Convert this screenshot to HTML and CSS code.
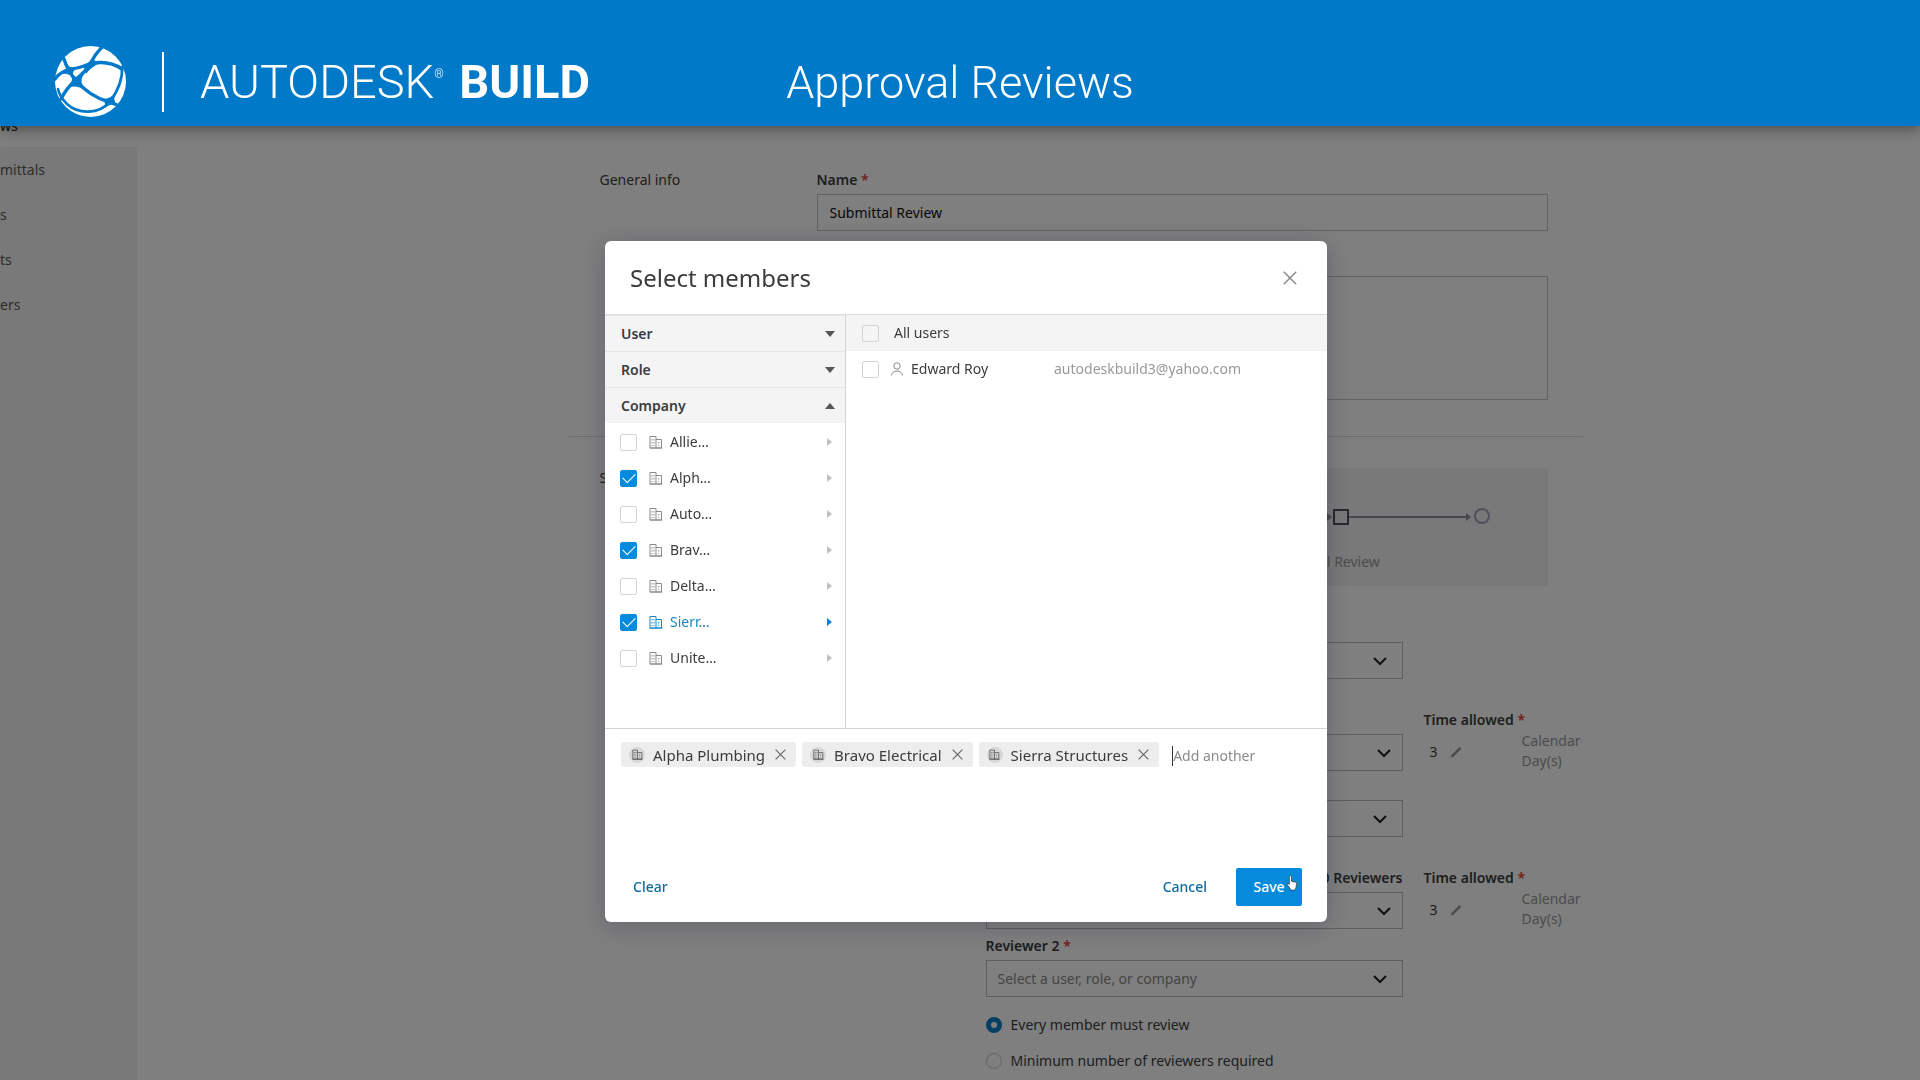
FILE: index.html
```html
<!DOCTYPE html>
<html lang="en">
<head>
<meta charset="utf-8">
<title>Autodesk Build - Approval Reviews</title>
<link rel="stylesheet" href="styles.css">
</head>
<body>
<svg class="defs" width="0" height="0" aria-hidden="true">
  <symbol id="building" viewBox="0 0 14 14">
    <path d="M1 1.500h6v11.500H1zM7 4.500h5.500V13H7M0.500 13h13" fill="none" stroke="currentColor"/>
    <path d="M3 4v7M5 4v7M9.750 7v4" fill="none" stroke="currentColor" stroke-dasharray="1.500 1.500"/>
  </symbol>
  <symbol id="cross" viewBox="0 0 14 14">
    <path d="M0.800 0.800l12.400 12.400M13.200 0.800L0.800 13.200" fill="none" stroke="currentColor" stroke-width="1.500"/>
  </symbol>
  <symbol id="chevron" viewBox="0 0 14 10">
    <path d="M1 2l6 6 6-6" fill="none" stroke="currentColor" stroke-width="2"/>
  </symbol>
  <symbol id="pencil" viewBox="0 0 12 12">
    <path d="M0.500 11.500l1-2.500L9.500 1l1.800 1.800-8 8z" fill="currentColor"/>
  </symbol>
</svg>

<header class="banner">
  <svg class="logo" viewBox="0 0 71 71" aria-hidden="true">
    <circle cx="35.500" cy="35.500" r="35.500" fill="#fff"/>
    <g fill="none" stroke="#007ac8" stroke-linecap="round">
      <path d="M48 0C42 6 38 12 35 18C32 25 25 29 20.500 34C14 40 10 45 6 53" stroke-width="3.400"/>
      <path d="M14 23C22 23 28 20 35 18C47 15 58 17 67 23" stroke-width="3.400"/>
      <path d="M9 13C11 20 15 27 20.500 34C29 44 40 52 54 56L65 60" stroke-width="3.400"/>
      <path d="M67 21C68 34 62 46 55 56C44 68 24 69 12 58C6 52 4 48 3 43" stroke-width="2.600"/>
      <path d="M0 33C4 27 9 25 14 23" stroke-width="3.400"/>
    </g>
    <g fill="#007ac8">
      <path d="M27 20Q34 18 39 10Q38 17 45 17Q36 21 31 28Q31 23 27 20z"/>
      <path d="M11 18Q14 22 22 22Q17 24 18 32Q14 27 7 28Q13 24 11 18z"/>
      <path d="M12 42Q19 38 16 28Q21 34 29 28Q23 36 31 44Q20 38 12 42z"/>
      <path d="M46 53Q56 54 61 45Q57 54 62 59Q56 57 49 62Q52 56 46 53z"/>
    </g>
  </svg>
  <span class="divider"></span>
  <p class="brand">AUTODESK<sup>®</sup> <b>BUILD</b></p>
  <h1 class="topic">Approval Reviews</h1>
</header>

<div class="page">
  <nav class="sidebar">
    <a href="#" class="active">ws</a>
    <a href="#">mittals</a>
    <a href="#">s</a>
    <a href="#">ts</a>
    <a href="#">ers</a>
  </nav>
  <main class="content">
    <form class="workflow">
      <section class="section">
        <h2>General info</h2>
        <div class="fields">
          <label for="name">Name <i>*</i></label>
          <input id="name" class="text" value="Submittal Review">
          <textarea class="text description" aria-label="Description"></textarea>
        </div>
      </section>
      <section class="section steps">
        <h2>Steps</h2>
        <div class="fields">
          <div class="diagram">
            <svg viewBox="0 0 240 26" width="240" height="26" aria-hidden="true">
              <g fill="none" stroke-width="2">
                <path d="M0 13h78M99 13h118" stroke="#8a9099" />
                <path d="M77 9l5 4-5 4zM216 9l5 4-5 4z" fill="#8a9099" />
                <rect x="84" y="6" width="14" height="14" stroke="#4d535b"/>
                <circle cx="232" cy="12" r="7" stroke="#9aa3b5"/>
              </g>
            </svg>
            <span class="caption">Final Review</span>
          </div>
          <div class="step">
            <div class="select first"><select aria-label="Step type"><option></option></select><svg><use href="#chevron"/></svg></div>
            <div class="cell"></div><div class="cell"></div>

            <div class="cell stack">
              <div class="heading"></div>
              <div class="select far"><select aria-label="Reviewer"><option></option></select><svg><use href="#chevron"/></svg></div>
            </div>
            <div class="cell">
              <div class="heading wide">Time allowed <i>*</i></div>
              <div class="days">3 <svg><use href="#pencil"/></svg></div>
            </div>
            <div class="unit">Calendar Day(s)</div>

            <div class="select second"><select aria-label="Step action"><option></option></select><svg><use href="#chevron"/></svg></div>
            <div class="cell"></div><div class="cell"></div>

            <div class="cell stack">
              <div class="heading right">0 Reviewers</div>
              <div class="select far"><select aria-label="Reviewer 1"><option></option></select><svg><use href="#chevron"/></svg></div>
            </div>
            <div class="cell">
              <div class="heading wide">Time allowed <i>*</i></div>
              <div class="days">3 <svg><use href="#pencil"/></svg></div>
            </div>
            <div class="unit">Calendar Day(s)</div>

            <div class="reviewer">
              <label for="reviewer2">Reviewer 2 <i>*</i></label>
              <div class="select"><select id="reviewer2"><option>Select a user, role, or company</option></select><svg><use href="#chevron"/></svg></div>
              <label class="radio"><input type="radio" name="rule" checked>Every member must review</label>
              <label class="radio"><input type="radio" name="rule">Minimum number of reviewers required</label>
            </div>
          </div>
        </div>
      </section>
    </form>
  </main>
</div>

<div class="overlay">
  <div class="modal" role="dialog" aria-labelledby="modal-title">
    <div class="modal-head">
      <h2 id="modal-title">Select members</h2>
      <button type="button" class="close" aria-label="Close"><svg><use href="#cross"/></svg></button>
    </div>
    <div class="modal-body">
      <div class="groups">
        <button type="button" class="group">User<span class="down"></span></button>
        <button type="button" class="group">Role<span class="down"></span></button>
        <button type="button" class="group">Company<span class="up"></span></button>
        <ul>
          <li><label><input type="checkbox"><svg><use href="#building"/></svg>Allie…</label><span class="next"></span></li>
          <li><label><input type="checkbox" checked><svg><use href="#building"/></svg>Alph…</label><span class="next"></span></li>
          <li><label><input type="checkbox"><svg><use href="#building"/></svg>Auto…</label><span class="next"></span></li>
          <li><label><input type="checkbox" checked><svg><use href="#building"/></svg>Brav…</label><span class="next"></span></li>
          <li><label><input type="checkbox"><svg><use href="#building"/></svg>Delta…</label><span class="next"></span></li>
          <li class="current"><label><input type="checkbox" checked><svg><use href="#building"/></svg>Sierr…</label><span class="next"></span></li>
          <li><label><input type="checkbox"><svg><use href="#building"/></svg>Unite…</label><span class="next"></span></li>
        </ul>
      </div>
      <div class="users">
        <label class="all"><input type="checkbox">All users</label>
        <div class="user">
          <label><input type="checkbox">
            <svg viewBox="0 0 14 14"><circle cx="7" cy="4" r="3.200" fill="none" stroke="currentColor"/><path d="M1.500 13.500c0-6 11-6 11 0" fill="none" stroke="currentColor"/></svg>
            Edward Roy</label>
          <span class="email">autodeskbuild3@yahoo.com</span>
        </div>
      </div>
    </div>
    <div class="chips">
      <span class="chip"><span class="badge"><svg><use href="#building"/></svg></span>Alpha Plumbing<button type="button" aria-label="Remove Alpha Plumbing"><svg><use href="#cross"/></svg></button></span>
      <span class="chip"><span class="badge"><svg><use href="#building"/></svg></span>Bravo Electrical<button type="button" aria-label="Remove Bravo Electrical"><svg><use href="#cross"/></svg></button></span>
      <span class="chip"><span class="badge"><svg><use href="#building"/></svg></span>Sierra Structures<button type="button" aria-label="Remove Sierra Structures"><svg><use href="#cross"/></svg></button></span>
      <input class="add" placeholder="Add another" aria-label="Add another">
    </div>
    <div class="modal-foot">
      <button type="button" class="link clear">Clear</button>
      <button type="button" class="link">Cancel</button>
      <button type="button" class="save">Save
        <svg class="pointer" viewBox="0 0 12 18" aria-hidden="true"><path d="M3 1.500q1.200-1.200 2.400 0V7l5 1.200q1 .4.900 1.600l-.8 4.200-1 3H4.500l-1-2.500L.7 11q-.4-1.400.8-1.500L3 10.500z" fill="#fff" stroke="#333" stroke-width=".8"/></svg>
      </button>
    </div>
  </div>
</div>
</body>
</html>
```
FILE: styles.css
```css
* { box-sizing: border-box; }
body {
  margin: 0;
  height: 100vh;
  overflow: hidden;
  display: flex;
  flex-direction: column;
  background: #fff;
  color: #3c3c3c;
  font: 14px/20px "Noto Sans", "Open Sans", sans-serif;
}
button, input, select, textarea { font: inherit; color: inherit; }
button { border: 0; padding: 0; background: none; cursor: pointer; }
h1, h2, p, ul { margin: 0; padding: 0; font-weight: 400; }
.defs { position: absolute; }

/* Banner */
.banner {
  position: relative;
  z-index: 3;
  flex: none;
  display: grid;
  grid-template-columns: 71px 2px 1fr;
  align-items: center;
  column-gap: 36px;
  height: 126px;
  padding: 37px 55px 0;
  background: #007ac8;
  color: #fff;
  box-shadow: 0 2px 14px rgba(0, 0, 0, .45);
}
.logo { width: 71px; height: 71px; }
.divider { height: 60px; background: #fff; }
.brand { font: 300 47px/60px Roboto, sans-serif; }
.brand sup { font-size: 12px; line-height: 12px; vertical-align: 20px; }
.brand b { font-weight: 700; margin-left: 4px; }
.topic {
  position: absolute;
  left: 0;
  right: 0;
  top: 53px;
  text-align: center;
  font: 300 45px/60px Roboto, sans-serif;
}

/* Page */
.page { flex: 1; display: flex; min-height: 0; overflow: hidden; }
.sidebar {
  flex: none;
  width: 137px;
  background: #f2f2f2;
}
.sidebar a {
  display: block;
  height: 45px;
  line-height: 45px;
  color: #5a5a5a;
  text-decoration: none;
}
.sidebar .active {
  height: 21px;
  line-height: 0;
  background: #fff;
  color: #222;
}
.content { flex: 1; padding-left: 94px; }
.workflow { max-width: 1014px; margin: 0 auto; }
.section {
  display: grid;
  grid-template-columns: 217px 1fr;
  padding: 44px 0 36px 31px;
}
.section h2 { font-size: 14px; }
.steps { padding-top: 31px; border-top: 1px solid #d9d9d9; }
.fields { display: flex; flex-direction: column; }
.fields label, .heading { font-weight: 600; }
i { color: #e0402f; font-style: normal; }
.text {
  margin: 4px 35px 0 0;
  height: 37px;
  padding: 0 12px;
  border: 1px solid #c4c4c4;
  border-radius: 0;
  background: #fff;
  color: #111;
}
.description { margin-top: 45px; height: 124px; resize: none; }
.diagram {
  display: flex;
  flex-direction: column;
  align-items: flex-end;
  gap: 22px;
  height: 118px;
  margin-right: 35px;
  padding: 36px 58px 0 0;
  background: #f2f2f2;
  color: #999;
}
.caption { width: 240px; padding-left: 50px; }
.step {
  display: grid;
  grid-template-columns: 417px 98px 60px;
  padding-left: 169px;
}
.step > :nth-child(3n+2) { padding-left: 21px; }
.select { display: grid; align-items: center; justify-items: end; }
.select > * { grid-area: 1 / 1; }
.select select {
  appearance: none;
  width: 100%;
  height: 37px;
  padding: 0 11px;
  border: 1px solid #bdbdbd;
  border-radius: 0;
  background: #fff;
  color: #8a8a8a;
}
.select svg { width: 14px; height: 10px; margin-right: 16px; color: #222; pointer-events: none; }
.select.far svg { margin-right: 12px; }
.select.first { margin-top: 56px; }
.select.second { margin-top: 29px; }
.step .unit { margin-left: 21px; width: 60px; color: #999; align-self: end; }
.heading { height: 20px; margin-bottom: 4px; }
.heading.wide { white-space: nowrap; }
.heading.right { text-align: right; }
.days { display: flex; align-items: center; gap: 12px; height: 36px; padding-left: 6px; }
.days svg { width: 12px; height: 12px; color: #999; }
.step .cell:not(:empty) { margin-top: 31px; }
.reviewer { grid-column: 1; display: flex; flex-direction: column; margin-top: 7px; }
.reviewer .select { margin-top: 4px; margin-bottom: 10px; }
.reviewer .radio { display: flex; align-items: center; gap: 9px; height: 36px; font-weight: 400; }
.radio input {
  appearance: none;
  width: 16px;
  height: 16px;
  margin: 0;
  border: 1px solid #c4c4c4;
  border-radius: 50%;
}
.radio input:checked { border: 5px solid #0a7fc8; background: #fff; }

/* Member picker */
.overlay {
  position: fixed;
  inset: 0;
  z-index: 2;
  display: flex;
  justify-content: center;
  align-items: flex-start;
  padding: 241px 0 0 12px;
  background: rgba(0, 0, 0, .5);
}
.modal {
  width: 722px;
  border-radius: 6px;
  background: #fff;
  box-shadow: 0 4px 24px rgba(40, 40, 70, .3);
  overflow: hidden;
}
.modal-head {
  display: flex;
  align-items: center;
  justify-content: space-between;
  height: 73px;
  padding: 0 30px 0 25px;
}
.modal-head h2 { font-size: 24px; line-height: 32px; }
.close svg { display: block; width: 14px; height: 14px; color: #8a8a8a; }
.modal-body {
  display: grid;
  grid-template-columns: 241px 1fr;
  height: 415px;
  border-top: 1px solid #ddd;
  border-bottom: 1px solid #d4d4d4;
}
.groups { border-right: 1px solid #d4d4d4; }
.group {
  display: flex;
  align-items: center;
  justify-content: space-between;
  width: 100%;
  height: 36px;
  padding: 0 10px 0 16px;
  border-top: 1px solid #e6e6e6;
  background: #f4f4f4;
  font-weight: 600;
}
.down, .up { border: 5px solid transparent; }
.down { border-top: 6px solid #555; border-bottom: 0; }
.up { border-bottom: 6px solid #555; border-top: 0; }
.groups ul { list-style: none; padding-top: 1px; }
.groups li {
  display: flex;
  align-items: center;
  justify-content: space-between;
  height: 36px;
  padding: 0 13px 0 15px;
}
.groups label, .users label { display: flex; align-items: center; }
.groups label svg { width: 14px; height: 14px; margin: 0 7px 0 12px; color: #8a8a8a; }
.next { border: 4px solid transparent; border-left: 5px solid #c0c0c0; border-right: 0; }
.groups .current label { color: #1a87c0; }
.groups .current svg { color: #1a87c0; }
.current .next { border-left-color: #0a87d0; }
input[type="checkbox"] {
  appearance: none;
  display: grid;
  place-items: center;
  width: 17px;
  height: 17px;
  margin: 0;
  border: 1px solid #d4d4d4;
  border-radius: 2px;
}
input[type="checkbox"]:checked { border-color: #068bdc; background: #068bdc; }
input[type="checkbox"]:checked::after {
  content: "";
  width: 11px;
  height: 6px;
  margin-top: -4px;
  border: solid #fff;
  border-width: 0 0 1px 1px;
  transform: rotate(-45deg);
}
.users label { gap: 15px; }
.users .all { height: 36px; padding-left: 16px; background: #f4f4f4; }
.user { display: grid; grid-template-columns: 208px 1fr; align-items: center; height: 36px; }
.user label { gap: 7px; padding-left: 16px; }
.user svg { width: 14px; height: 14px; margin-left: 4px; color: #8a8a8a; }
.email { color: #999; }
.chips { display: flex; align-items: flex-start; gap: 6px; height: 125px; padding: 13px 16px 0; }
.chip {
  display: flex;
  align-items: center;
  height: 25px;
  padding: 0 10px 0 8px;
  border-radius: 3px;
  background: #ededed;
  font-size: 15px;
  white-space: nowrap;
}
.badge {
  display: grid;
  place-items: center;
  width: 16px;
  height: 16px;
  margin-right: 8px;
  border-radius: 50%;
  background: #d8d8d8;
}
.badge svg { width: 11px; height: 11px; color: #555; }
.chip button { margin-left: 10px; }
.chip button svg { display: block; width: 11px; height: 11px; color: #666; }
.add {
  flex: 1;
  min-width: 0;
  height: 20px;
  margin: 4px 0 0 7px;
  padding: 0;
  border: 0;
  border-left: 1px solid #333;
  outline: 0;
}
.add::placeholder { color: #8a8a8a; }
.modal-foot { display: flex; align-items: flex-start; gap: 29px; height: 68px; padding: 14px 25px 0 28px; }
.link { height: 38px; color: #0e6a9c; font-weight: 500; }
.clear { margin-right: auto; }
.save {
  position: relative;
  width: 66px;
  height: 38px;
  border-radius: 2px;
  background: #068bdc;
  color: #fff;
  font-weight: 500;
}
.pointer { position: absolute; right: 4px; top: 7px; width: 12px; height: 16px; }
```
